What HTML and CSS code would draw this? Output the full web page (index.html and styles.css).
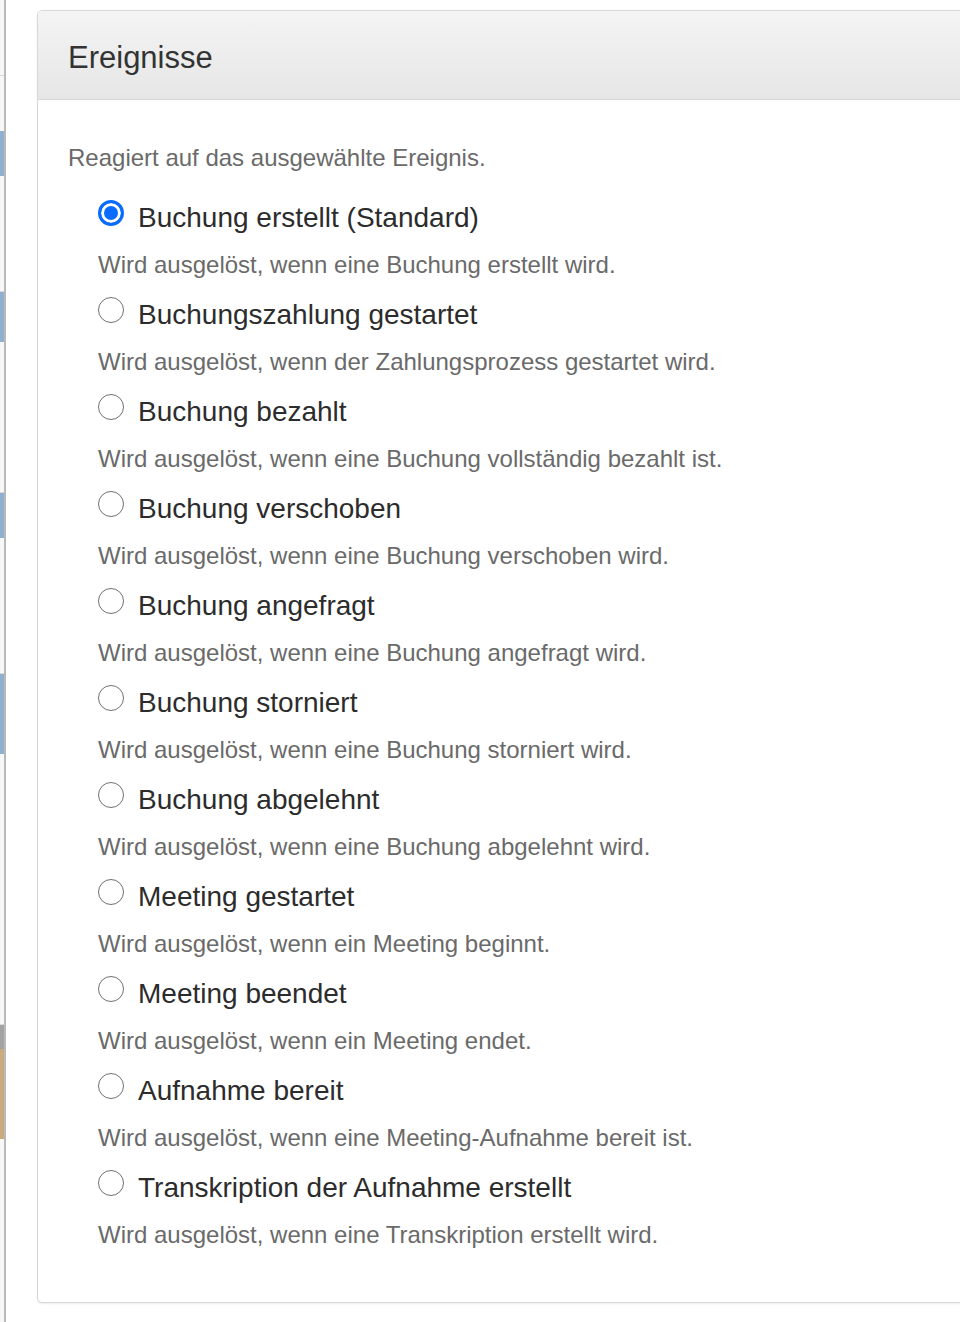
FILE: index.html
```html
<!DOCTYPE html>
<html lang="de">
<head>
<meta charset="utf-8">
<title>Ereignisse</title>
<link rel="stylesheet" href="styles.css">
</head>
<body>
<div class="page">
  <div class="side-strip">
    <div class="seg s1"></div>
    <div class="seg s2 blue"></div>
    <div class="seg s3"></div>
    <div class="seg s4 blue"></div>
    <div class="seg s5"></div>
    <div class="seg s6 blue"></div>
    <div class="seg s7"></div>
    <div class="seg s8 blue"></div>
    <div class="seg s9"></div>
    <div class="seg s10 grey"></div>
    <div class="seg s11 tan"></div>
    <div class="seg s12"></div>
  </div>
  <main class="main">
    <section class="panel">
      <header class="panel-heading">
        <h2 class="panel-title">Ereignisse</h2>
      </header>
      <div class="panel-body">
        <p class="intro">Reagiert auf das ausgewählte Ereignis.</p>
        <div class="options">
          <div class="option">
            <label class="option-label"><input type="radio" name="event" class="radio" checked><span>Buchung erstellt (Standard)</span></label>
            <p class="hint">Wird ausgelöst, wenn eine Buchung erstellt wird.</p>
          </div>
          <div class="option">
            <label class="option-label"><input type="radio" name="event" class="radio"><span>Buchungszahlung gestartet</span></label>
            <p class="hint">Wird ausgelöst, wenn der Zahlungsprozess gestartet wird.</p>
          </div>
          <div class="option">
            <label class="option-label"><input type="radio" name="event" class="radio"><span>Buchung bezahlt</span></label>
            <p class="hint">Wird ausgelöst, wenn eine Buchung vollständig bezahlt ist.</p>
          </div>
          <div class="option">
            <label class="option-label"><input type="radio" name="event" class="radio"><span>Buchung verschoben</span></label>
            <p class="hint">Wird ausgelöst, wenn eine Buchung verschoben wird.</p>
          </div>
          <div class="option">
            <label class="option-label"><input type="radio" name="event" class="radio"><span>Buchung angefragt</span></label>
            <p class="hint">Wird ausgelöst, wenn eine Buchung angefragt wird.</p>
          </div>
          <div class="option">
            <label class="option-label"><input type="radio" name="event" class="radio"><span>Buchung storniert</span></label>
            <p class="hint">Wird ausgelöst, wenn eine Buchung storniert wird.</p>
          </div>
          <div class="option">
            <label class="option-label"><input type="radio" name="event" class="radio"><span>Buchung abgelehnt</span></label>
            <p class="hint">Wird ausgelöst, wenn eine Buchung abgelehnt wird.</p>
          </div>
          <div class="option">
            <label class="option-label"><input type="radio" name="event" class="radio"><span>Meeting gestartet</span></label>
            <p class="hint">Wird ausgelöst, wenn ein Meeting beginnt.</p>
          </div>
          <div class="option">
            <label class="option-label"><input type="radio" name="event" class="radio"><span>Meeting beendet</span></label>
            <p class="hint">Wird ausgelöst, wenn ein Meeting endet.</p>
          </div>
          <div class="option">
            <label class="option-label"><input type="radio" name="event" class="radio"><span>Aufnahme bereit</span></label>
            <p class="hint">Wird ausgelöst, wenn eine Meeting-Aufnahme bereit ist.</p>
          </div>
          <div class="option">
            <label class="option-label"><input type="radio" name="event" class="radio"><span>Transkription der Aufnahme erstellt</span></label>
            <p class="hint">Wird ausgelöst, wenn eine Transkription erstellt wird.</p>
          </div>
        </div>
      </div>
    </section>
  </main>
</div>
</body>
</html>
```

FILE: styles.css
```css
html, body {
  margin: 0;
  padding: 0;
  background: #ffffff;
  overflow: hidden;
}

body {
  font-family: "Liberation Sans", Arial, Helvetica, sans-serif;
  color: #333333;
  width: 960px;
  height: 1322px;
}

.page {
  display: flex;
  height: 1322px;
}

.side-strip {
  width: 4px;
  flex: 0 0 4px;
  display: flex;
  flex-direction: column;
  background: #f7f7f7;
  border-right: 2px solid #b9b9b9;
}

.seg {
  border-bottom: 1px solid #d9d9d9;
}
.seg.blue { background: #8fb0cf; border-bottom: none; }
.seg.grey { background: #a3a3a3; border-bottom: none; }
.seg.tan { background: #c9ab7e; border-bottom: none; }
.s1 { height: 75px; }
.s2 { height: 45px; margin-top: 55px; }
.s3 { height: 115px; }
.s4 { height: 50px; }
.s5 { height: 150px; }
.s6 { height: 45px; }
.s7 { height: 135px; }
.s8 { height: 80px; }
.s9 { height: 270px; }
.s10 { height: 24px; }
.s11 { height: 90px; }
.s12 { flex: 1; border-bottom: none; }

.main {
  flex: 1;
  padding: 10px 0 0 31px;
  min-width: 0;
}

.panel {
  width: 960px;
  height: 1293px;
  box-sizing: border-box;
  border: 1px solid #d8d8d8;
  border-radius: 5px;
  background: #ffffff;
  box-shadow: 0 1px 2px rgba(0, 0, 0, 0.08);
  overflow: hidden;
  display: flex;
  flex-direction: column;
}

.panel-heading {
  height: 89px;
  box-sizing: border-box;
  padding: 0 30px;
  background: linear-gradient(to bottom, #f4f4f4 0%, #e6e6e6 100%);
  border-bottom: 1px solid #d6d6d6;
  display: flex;
  align-items: center;
}

.panel-title {
  margin: 0;
  font-size: 31px;
  font-weight: normal;
  color: #333333;
  line-height: 36px;
  padding-top: 6px;
}

.panel-body {
  padding: 41px 30px 0 30px;
}

.intro {
  margin: 0 0 21px 0;
  font-size: 24px;
  line-height: 34px;
  color: #6a6a6a;
}

.options {
  padding-left: 30px;
  display: flex;
  flex-direction: column;
}

.option {
  display: flex;
  flex-direction: column;
  margin-bottom: 3px;
}

.option-label {
  display: flex;
  align-items: center;
  height: 44px;
  font-size: 28px;
  color: #2c2c2c;
  gap: 14px;
}

.radio {
  appearance: none;
  -webkit-appearance: none;
  margin: 0;
  width: 26px;
  height: 26px;
  flex: 0 0 26px;
  border-radius: 50%;
  box-sizing: border-box;
  border: 1.5px solid #707070;
  background: #ffffff;
  position: relative;
  top: -5px;
}

.radio:checked {
  border: 3px solid #0a6bff;
  background: #0a6bff;
  box-shadow: inset 0 0 0 3px #ffffff;
}

.hint {
  margin: 0;
  font-size: 24px;
  line-height: 50px;
  color: #6a6a6a;
}
```
